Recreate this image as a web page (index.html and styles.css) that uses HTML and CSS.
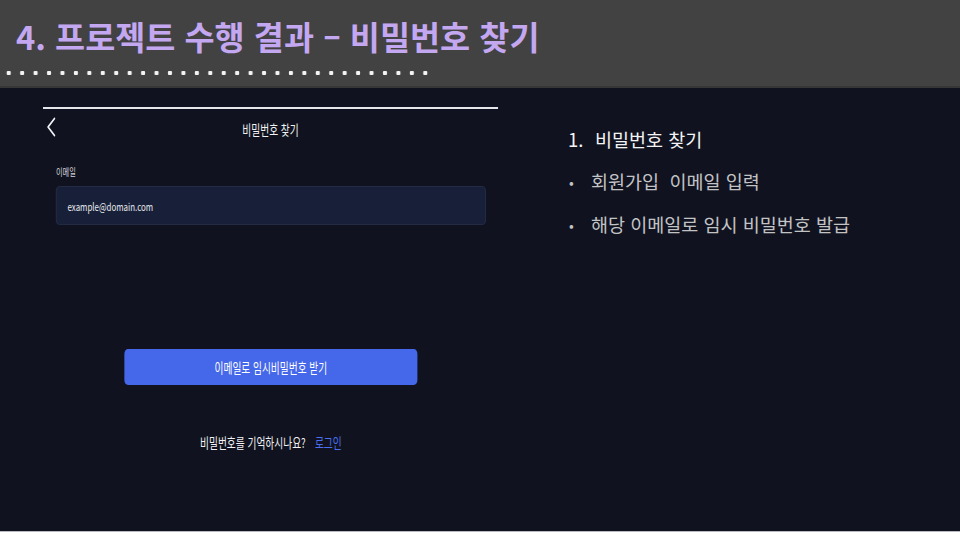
FILE: index.html
```html
<!DOCTYPE html>
<html lang="ko">
    <head>
        <meta charset="utf-8">
        <title>4. 프로젝트 수행 결과 - 비밀번호 찾기</title>
        <link rel="stylesheet" href="styles.css">
    </head>
    <body>
        <div class="slide">
            <header class="title-bar">
                <h1>4. 프로젝트 수행 결과 – 비밀번호 찾기</h1>
                <div class="dots"></div>
            </header>

            <main class="content">
                <!-- 앱 화면 캡처 (가로로 약간 눌려 있음) -->
                <section class="phone">
                    <div class="screen">
                        <div class="status-line"></div>
                        <div class="app-header">
                            <svg class="back" width="14" height="20" viewBox="0 0 14 20">
                                <polyline points="12,1.5 3,10 12,18.5" fill="none" stroke="#f2f3f6" stroke-width="2" stroke-linecap="round" stroke-linejoin="round"/>
                            </svg>
                            <span class="app-title">비밀번호 찾기</span>
                        </div>

                        <form class="form">
                            <label class="field-label">이메일</label>
                            <div class="field">example@domain.com</div>
                            <button type="button" class="submit">이메일로 임시비밀번호 받기</button>
                            <p class="login-line">비밀번호를 기억하시나요? <a href="#">로그인</a></p>
                        </form>
                    </div>
                </section>

                <section class="notes">
                    <ul>
                        <li class="head"><span class="num">1.</span>비밀번호 찾기</li>
                        <li><span class="bullet">•</span>회원가입&nbsp;&nbsp;이메일 입력</li>
                        <li><span class="bullet">•</span>해당 이메일로 임시 비밀번호 발급</li>
                    </ul>
                </section>
            </main>
        </div>
    </body>
</html>
```

FILE: styles.css
```css
body {
    margin: 0;
    background-color: #fff;
    font-family: 'Noto Sans CJK KR', 'Noto Sans', sans-serif;
}

.slide {
    width: 960px;
    height: 540px;
    overflow: hidden;
}

/* 상단 제목 영역 */
.title-bar {
    height: 86px;
    background-color: #424242;
    border-bottom: 2px solid #363636;
}

.title-bar h1 {
    margin: 0;
    padding: 19px 0 0 16px;
    font-size: 32.7px;
    line-height: 34px;
    font-weight: 700;
    color: #c3a7f1;
}

.dots {
    margin: 17px 0 0 2px;
    width: 431px;
    height: 6px;
    background: radial-gradient(circle, #f4f4f4 2px, transparent 2.5px) 0 0 / 13.45px 6px repeat-x;
}

/* 본문 */
.content {
    display: flex;
    height: 443px;
    background-color: #10131f;
    border-bottom: 1px solid #b7bbc2;
}

.phone {
    width: 455px;
    margin-left: 43px;
    padding-top: 19px;
}

.screen {
    width: 632px;
    transform: scaleX(0.72);
    transform-origin: left top;
}

.status-line {
    height: 2px;
    background-color: #e4e6ec;
}

.app-header {
    display: grid;
    grid-template-columns: 40px 1fr 40px;
    align-items: center;
    height: 40px;
}

.back {
    margin-left: 4px;
    margin-top: -4px;
}

.app-title {
    text-align: center;
    color: #f3f3f5;
    font-size: 13.5px;
}

.form {
    display: flex;
    flex-direction: column;
    padding: 0 17px 0 18px;
}

.field-label {
    margin-top: 16px;
    font-size: 10px;
    line-height: 14px;
    color: #d0d2d8;
}

.field {
    margin-top: 7px;
    height: 39px;
    box-sizing: border-box;
    padding-left: 15px;
    display: flex;
    align-items: center;
    background-color: #182039;
    border: 1px solid #262e48;
    border-radius: 5px;
    color: #e6e8ec;
    font-size: 11px;
}

.submit {
    margin: 124px auto 0;
    width: 407px;
    height: 36px;
    border: none;
    border-radius: 5px;
    background-color: #4567ea;
    color: #fff;
    font-family: inherit;
    font-size: 13.5px;
}

.login-line {
    margin: 49px 0 0;
    text-align: center;
    font-size: 13.5px;
    line-height: 16px;
    color: #f2f2f4;
}

.login-line a {
    margin-left: 9px;
    color: #4d70f2;
    text-decoration: none;
}

/* 오른쪽 설명 */
.notes {
    margin-left: 70px;
    padding-top: 30px;
}

.notes ul {
    margin: 0;
    padding: 0;
    list-style: none;
}

.notes li {
    font-size: 18.5px;
    line-height: 42px;
    color: #c3c3c6;
}

.notes li.head {
    color: #f4f4f6;
}

.num {
    display: inline-block;
    width: 27px;
}

.bullet {
    display: inline-block;
    width: 22px;
    padding-left: 1px;
    font-size: 14px;
    vertical-align: 1px;
}
```
